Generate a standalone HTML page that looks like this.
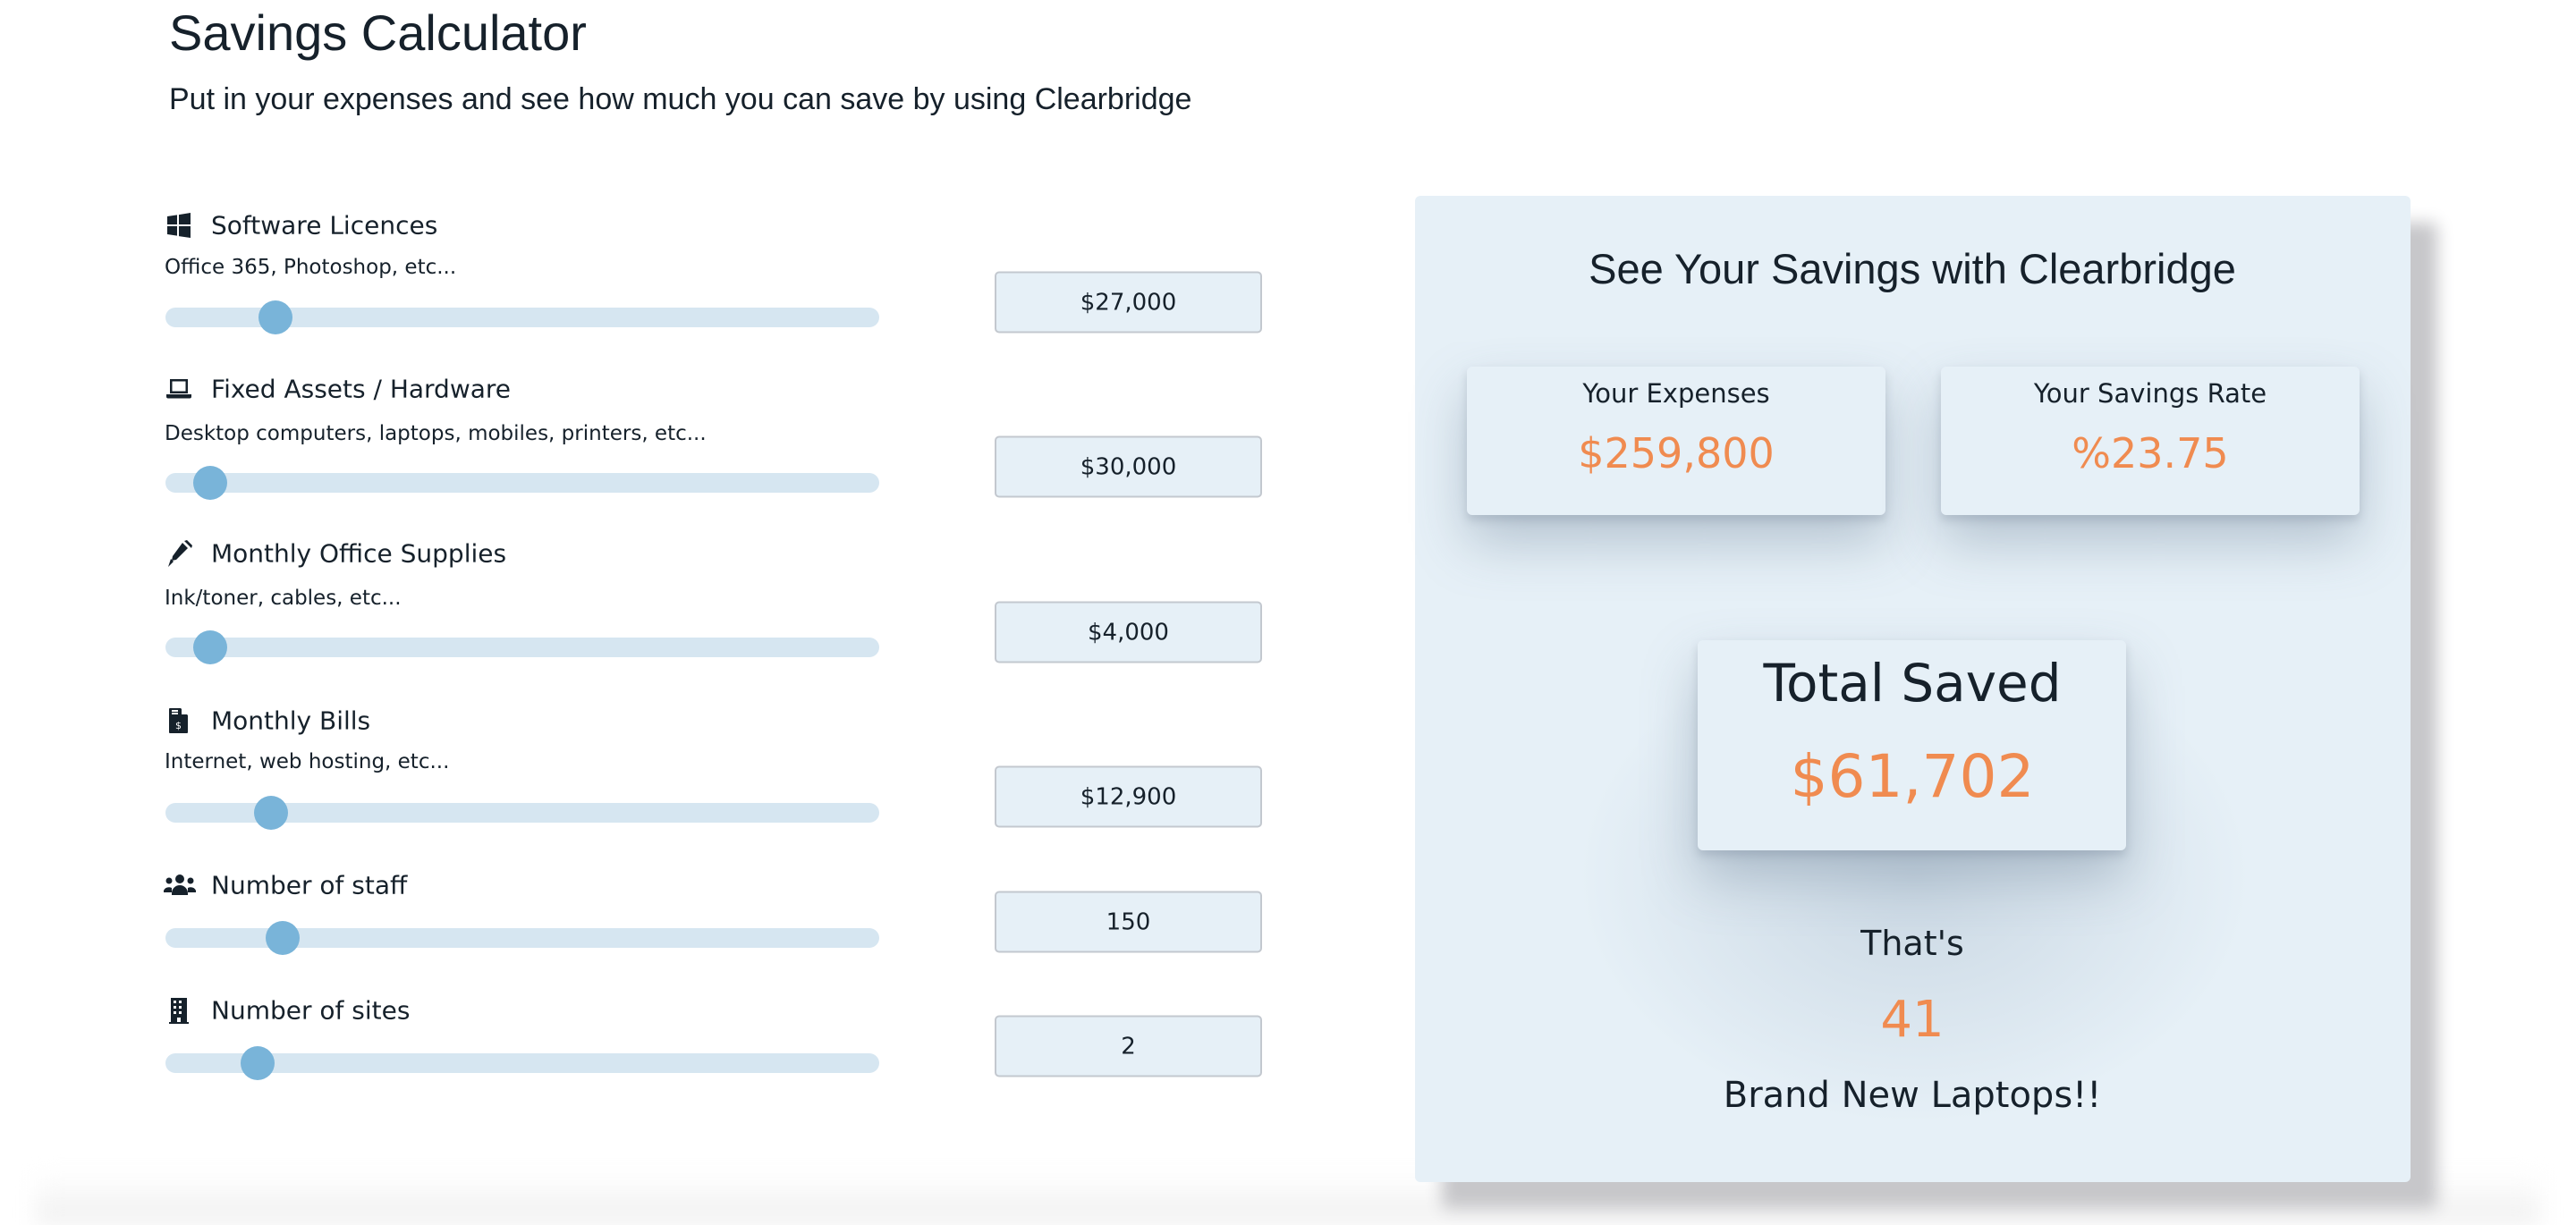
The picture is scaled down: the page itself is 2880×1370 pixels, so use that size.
<!DOCTYPE html>
<html style="overflow:hidden;height:1370px"><head><meta charset="utf-8"><style>
*{margin:0;padding:0;box-sizing:border-box}
html,body{width:2880px;height:1370px;overflow:hidden}
body{background:#fff;position:relative;font-family:"Liberation Sans","DejaVu Sans",sans-serif;color:#16212b}
.a{position:absolute;white-space:nowrap}
.bot{position:absolute;left:40px;right:40px;top:1310px;height:60px;background:linear-gradient(#fff,#efefef);filter:blur(12px)}
.t1{left:189px;top:4px;font-size:56px;letter-spacing:0px}
.t2{left:189px;top:92px;font-size:34px}
.lab{left:236px;font-family:"DejaVu Sans",sans-serif;font-size:28px;transform:translateY(-50%)}
.ic{left:185px;width:30px;height:30px;transform:translateY(-50%)}
.desc{left:184px;font-family:"DejaVu Sans",sans-serif;font-size:23px;transform:translateY(-50%)}
.tr{left:185px;width:798px;height:22px;border-radius:11px;background:#d6e6f1;transform:translateY(-50%)}
.th{width:38px;height:38px;border-radius:50%;background:#79b4d9;transform:translate(-50%,-50%)}
.box{left:1112px;width:299px;height:69px;border:2px solid #c3c8cf;border-radius:5px;background:#e6f0f7;font-family:"DejaVu Sans",sans-serif;font-size:26px;display:flex;align-items:center;justify-content:center;transform:translateY(-50%)}
.panel{left:1582px;top:219px;width:1113px;height:1103px;background:#e6f0f7;border-radius:6px;box-shadow:30px 30px 18px #c7c7ca}
.c{text-align:center;transform:translateX(-50%)}
.card{background:#e6f0f7;border-radius:6px;box-shadow:0 30px 60px rgba(120,140,160,.45),0 6px 10px rgba(100,110,130,.25)}
.or{color:#f08b50}
.m{font-family:"DejaVu Sans",sans-serif}
</style></head><body>
<div class="bot"></div>
<div class="a t1">Savings Calculator</div>
<div class="a t2">Put in your expenses and see how much you can save by using Clearbridge</div>

<svg class="a ic" style="top:252px" viewBox="0 0 30 30"><path d="M2 5l11-1.6V14H2zM15 3.1L28 1v13H15zM2 16h11v10.6L2 25zM15 16h13v13l-13-1.9z" fill="#16212b"/></svg>
<div class="a lab" style="top:252px">Software Licences</div>
<div class="a desc" style="top:299px">Office 365, Photoshop, etc...</div>
<div class="a tr" style="top:355px"></div><div class="a th" style="left:308px;top:355px"></div>
<div class="a box" style="top:338px">$27,000</div>

<svg class="a ic" style="top:435px" viewBox="0 0 30 30"><path d="M5 4h20v16H5z M7.5 6.5v11h15v-11z" fill="#16212b" fill-rule="evenodd"/><path d="M1 21h28v2.5a2 2 0 0 1-2 2H3a2 2 0 0 1-2-2z" fill="#16212b"/></svg>
<div class="a lab" style="top:435px">Fixed Assets / Hardware</div>
<div class="a desc" style="top:485px">Desktop computers, laptops, mobiles, printers, etc...</div>
<div class="a tr" style="top:540px"></div><div class="a th" style="left:235px;top:540px"></div>
<div class="a box" style="top:522px">$30,000</div>

<svg class="a ic" style="top:619px" viewBox="0 0 30 30"><path d="M19 3l6 6-13 13-5 1 1-5z M21 1l3-1 6 6-1 3z M6 21l3 3-6 6z" fill="#16212b"/></svg>
<div class="a lab" style="top:619px">Monthly Office Supplies</div>
<div class="a desc" style="top:669px">Ink/toner, cables, etc...</div>
<div class="a tr" style="top:724px"></div><div class="a th" style="left:235px;top:724px"></div>
<div class="a box" style="top:707px">$4,000</div>

<svg class="a ic" style="top:806px" viewBox="0 0 30 30"><path d="M5 1h12l8 8v19a1 1 0 0 1-1 1H5a1 1 0 0 1-1-1V2a1 1 0 0 1 1-1z" fill="#16212b"/><path d="M18 1v7h7" fill="#fff"/><path d="M7 4h7M7 7h7" stroke="#fff" stroke-width="2"/><text x="14.5" y="24" font-size="11" fill="#fff" text-anchor="middle" font-family="DejaVu Sans">$</text></svg>
<div class="a lab" style="top:806px">Monthly Bills</div>
<div class="a desc" style="top:852px">Internet, web hosting, etc...</div>
<div class="a tr" style="top:909px"></div><div class="a th" style="left:303px;top:909px"></div>
<div class="a box" style="top:891px">$12,900</div>

<svg class="a ic" style="top:990px;width:38px;left:182px" viewBox="0 0 38 30"><circle cx="19" cy="8" r="5" fill="#16212b"/><circle cx="7" cy="10" r="3.5" fill="#16212b"/><circle cx="31" cy="10" r="3.5" fill="#16212b"/><path d="M10 24a9 9 0 0 1 18 0v2H10z M1 21a6 5 0 0 1 9-3v5H1z M28 18a6 5 0 0 1 9 3v2h-9z" fill="#16212b"/></svg>
<div class="a lab" style="top:990px">Number of staff</div>
<div class="a tr" style="top:1049px"></div><div class="a th" style="left:316px;top:1049px"></div>
<div class="a box" style="top:1031px">150</div>

<svg class="a ic" style="top:1130px" viewBox="0 0 30 30"><path d="M6 1h18v27h2v2H4v-2h2z" fill="#16212b"/><g fill="#fff"><rect x="9" y="4" width="3" height="3"/><rect x="15" y="4" width="3" height="3"/><rect x="9" y="10" width="3" height="3"/><rect x="15" y="10" width="3" height="3"/><rect x="9" y="16" width="3" height="3"/><rect x="15" y="16" width="3" height="3"/><rect x="13" y="23" width="4" height="5"/></g></svg>
<div class="a lab" style="top:1130px">Number of sites</div>
<div class="a tr" style="top:1189px"></div><div class="a th" style="left:288px;top:1189px"></div>
<div class="a box" style="top:1170px">2</div>

<div class="a panel"></div>
<div class="a" style="left:1760px;top:700px;width:760px;height:560px;border-radius:50%;background:radial-gradient(ellipse,rgba(150,170,190,.35),rgba(150,170,190,0) 70%)"></div>
<div class="a c" style="left:2138px;top:273px;font-size:47px">See Your Savings with Clearbridge</div>

<div class="a card" style="left:1640px;top:410px;width:468px;height:166px"></div>
<div class="a c m" style="left:1874px;top:423px;font-size:29px">Your Expenses</div>
<div class="a c m or" style="left:1874px;top:480px;font-size:46px">$259,800</div>
<div class="a card" style="left:2170px;top:410px;width:468px;height:166px"></div>
<div class="a c m" style="left:2404px;top:423px;font-size:29px">Your Savings Rate</div>
<div class="a c m or" style="left:2404px;top:480px;font-size:46px">%23.75</div>

<div class="a card" style="left:1898px;top:716px;width:479px;height:235px"></div>
<div class="a c m" style="left:2138px;top:730px;font-size:58px">Total Saved</div>
<div class="a c m or" style="left:2138px;top:830px;font-size:66px">$61,702</div>

<div class="a c m" style="left:2138px;top:1033px;font-size:38px">That's</div>
<div class="a c m or" style="left:2138px;top:1108px;font-size:56px">41</div>
<div class="a c m" style="left:2138px;top:1202px;font-size:40px">Brand New Laptops!!</div>
</body></html>
